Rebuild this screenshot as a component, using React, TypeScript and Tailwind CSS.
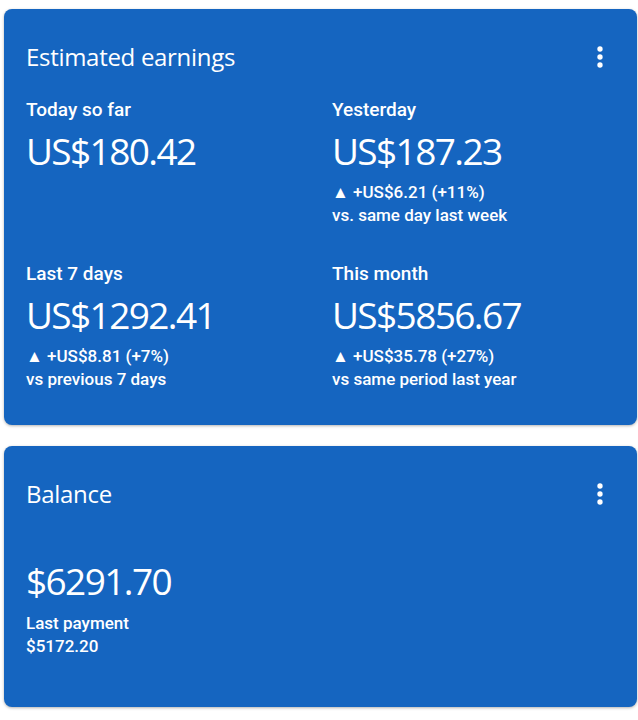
interface Stat {
  label: string;
  value: string;
  change?: string;
  note?: string;
}

const stats: Stat[] = [
  { label: 'Today so far', value: 'US$180.42' },
  { label: 'Yesterday', value: 'US$187.23', change: '+US$6.21 (+11%)', note: 'vs. same day last week' },
  { label: 'Last 7 days', value: 'US$1292.41', change: '+US$8.81 (+7%)', note: 'vs previous 7 days' },
  { label: 'This month', value: 'US$5856.67', change: '+US$35.78 (+27%)', note: 'vs same period last year' },
];

function Kebab() {
  return (
    <svg width="32" height="32" viewBox="0 0 24 24" fill="white" className="shrink-0">
      <circle cx="12" cy="6" r="2" />
      <circle cx="12" cy="12" r="2" />
      <circle cx="12" cy="18" r="2" />
    </svg>
  );
}

function CardHeader({ title }: { title: string }) {
  return (
    <div className="flex items-center justify-between h-[32px]">
      <h2 className="text-[24px] leading-[32px] font-['Open_Sans',sans-serif] tracking-[-0.3px]">{title}</h2>
      <div className="mr-[5px]">
        <Kebab />
      </div>
    </div>
  );
}

function StatBlock({ stat }: { stat: Stat }) {
  return (
    <div className="flex flex-col">
      <p className="text-[19px] leading-[28px] font-medium">{stat.label}</p>
      <p className="text-[37px] leading-[44px] mt-[5px] font-['Open_Sans',sans-serif] tracking-[-1.6px]">{stat.value}</p>
      {stat.change && (
        <div className="mt-[8px] text-[17px] leading-[23px] font-medium">
          <p>▲ {stat.change}</p>
          <p>{stat.note}</p>
        </div>
      )}
    </div>
  );
}

export default function App() {
  return (
    <div className="min-h-screen bg-white pt-[9px] pl-[4px] pr-[1px] font-['Roboto',sans-serif] text-white">
      {/* Estimated earnings */}
      <section className="rounded-lg bg-[#1565c0] shadow-[0_1px_3px_rgba(0,0,0,0.3)] pl-[22px] pr-[16px] pt-[32px] pb-[34px]">
        <CardHeader title="Estimated earnings" />
        <div className="grid grid-cols-[306px_1fr] gap-y-[33px] mt-[23px]">
          {stats.map((s) => (
            <StatBlock key={s.label} stat={s} />
          ))}
        </div>
      </section>

      {/* Balance */}
      <section className="mt-[21px] rounded-lg bg-[#1565c0] shadow-[0_1px_3px_rgba(0,0,0,0.3)] pl-[22px] pr-[16px] pt-[32px] pb-[49px]">
        <CardHeader title="Balance" />
        <p className="mt-[49px] text-[37px] leading-[44px] font-['Open_Sans',sans-serif] tracking-[-1.6px]">$6291.70</p>
        <div className="mt-[9px] text-[17px] leading-[23px] font-medium">
          <p>Last payment</p>
          <p>$5172.20</p>
        </div>
      </section>
    </div>
  );
}
